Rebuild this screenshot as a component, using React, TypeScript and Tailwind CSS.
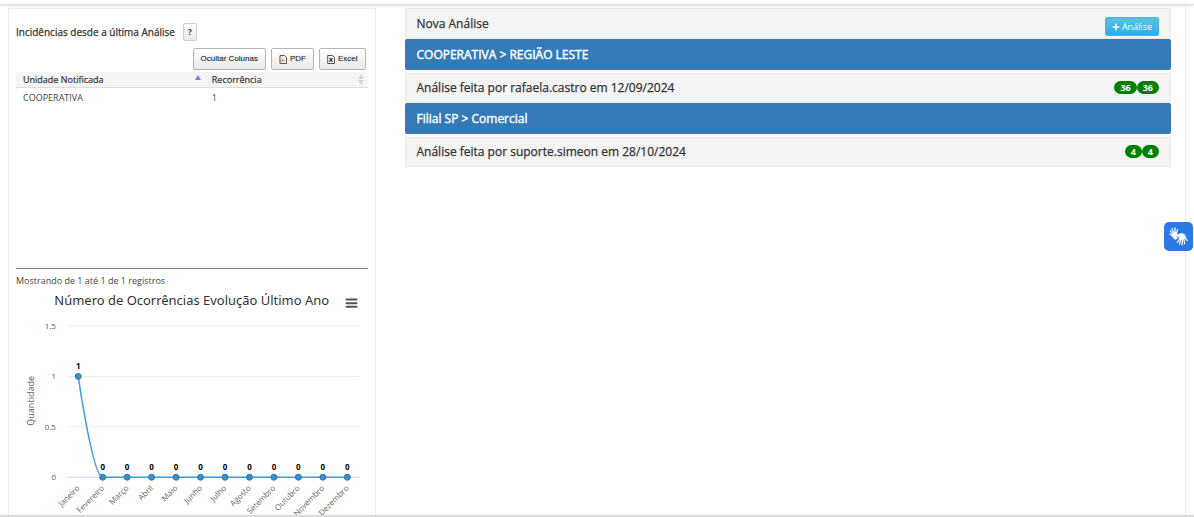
import { FaPlus } from "react-icons/fa";

const months = [
  "Janeiro", "Fevereiro", "Março", "Abril", "Maio", "Junho",
  "Julho", "Agosto", "Setembro", "Outubro", "Novembro", "Dezembro",
];
const values = [1, 0, 0, 0, 0, 0, 0, 0, 0, 0, 0, 0];
const ticks = [1.5, 1, 0.5, 0];

const px = (i: number) => 62.3 + i * 24.5;
const py = (v: number) => 190.5 - v * 101;

function Chart() {
  return (
    <svg viewBox="0 0 352 228" className="block w-full overflow-visible font-['Noto_Sans',sans-serif]" role="img" aria-label="Número de Ocorrências Evolução Último Ano">
      <text x="176" y="18" textAnchor="middle" fontSize="13" fill="#333">Número de Ocorrências Evolução Último Ano</text>
      <path d="M331 12.5h10M331 16.2h10M331 19.9h10" stroke="#555" strokeWidth="2" strokeLinecap="round" />
      {ticks.map((t) => (
        <g key={t}>
          <path d={`M51 ${py(t)}H344`} stroke={t === 0 ? "#ccd6eb" : "#ededed"} />
          <text x="40" y={py(t) + 3} textAnchor="end" fontSize="8" fill="#666">{t}</text>
        </g>
      ))}
      <text transform="translate(18 114) rotate(-90)" textAnchor="middle" fontSize="9" fill="#666">Quantidade</text>
      <path
        d={`M${px(0)} ${py(1)}C${px(0)} ${py(1)} 76.8 ${py(0)} ${px(1)} ${py(0)}H${px(11)}`}
        fill="none" stroke="#3d9fe0" strokeWidth="1.5"
      />
      {months.map((m, i) => (
        <g key={m}>
          <circle cx={px(i)} cy={py(values[i])} r="3" fill="#2b93dc" stroke="#4d6f88" />
          <text x={px(i)} y={py(values[i]) - 7} textAnchor="middle" fontSize="8" fontWeight="700" fill="#000">{values[i]}</text>
          <text transform={`translate(${px(i) + 2} 202) rotate(-45)`} textAnchor="end" fontSize="8" fill="#666" className="font-['Open_Sans',sans-serif]">{m}</text>
        </g>
      ))}
    </svg>
  );
}

function PdfIcon() {
  return (
    <svg width="8" height="9" viewBox="0 0 8 9" fill="none">
      <path d="M1 .5h4.5l2 2v6H1z" stroke="#444" strokeWidth=".9" />
      <path d="M2.3 7C3.6 5.8 4 4 3.8 2.8M3.8 4.6c.5 1 1.4 1.3 2.4 1.2M2.6 6l3-.6" stroke="#b98c6a" strokeWidth=".8" />
      <path d="M.8 1v7.6" stroke="#c48a52" strokeWidth=".8" />
    </svg>
  );
}

function ExcelIcon() {
  return (
    <svg width="8" height="9" viewBox="0 0 8 9" fill="none">
      <path d="M.7 .5h4.8l2 2v6H.7z" stroke="#444" strokeWidth=".9" />
      <path d="M2.5 3l3 3.6M5.5 3l-3 3.6" stroke="#222" strokeWidth="1.1" />
    </svg>
  );
}

function HandsIcon() {
  return (
    <svg width="19" height="19" viewBox="0.5 0.5 17 17" fill="none" stroke="#fff" strokeLinecap="round" strokeLinejoin="round">
      <path d="M4 6.5 6.5 5.3 8.3 7.4 7 9.2 8 10.8 5.8 11.6 3.8 9.6z" fill="#fff" strokeWidth=".6" />
      <path d="M4.2 7.5 1.7 4M5 6.5 3.2 1.8M6 6 5.9 1.2M7 6.5 8.2 2.6M4.4 9 1.2 6.8" strokeWidth="1.1" />
      <path d="M9 7.3 11.5 6.2 14.6 7.3 15.3 10 13 11.7 10 11.2 9.7 9.5 8.2 9.3z" fill="#fff" strokeWidth=".6" />
      <path d="M10.4 10.8 7.8 14.2M11.4 11 9.8 16M12.7 11 12.2 16.4M13.8 10.8 14.5 15.4M14.8 9.8 16.8 12.6" strokeWidth="1.1" />
    </svg>
  );
}

function Badge({ children }: { children: number }) {
  return <span className="rounded-full bg-[#008000] px-1.5 text-[9px] leading-[13px] font-bold text-white">{children}</span>;
}

function Row({ title, count }: { title: string; count: number }) {
  return (
    <div className="mt-[3px] flex h-[30px] items-center justify-between rounded-xs border border-[#e8e8e8] bg-[#f4f4f4] px-[11px]">
      <h3 className="[-webkit-text-stroke:0.25px]">{title}</h3>
      <div className="flex pb-[2px]">
        <Badge>{count}</Badge>
        <Badge>{count}</Badge>
      </div>
    </div>
  );
}

function Group({ title }: { title: string }) {
  return <h2 className="flex h-[31px] items-center rounded-xs bg-[#337ab7] px-3 text-white [-webkit-text-stroke:0.4px]">{title}</h2>;
}

const toolButton =
  "flex h-[22px] items-center gap-[3px] rounded-xs border border-[#b5b5b5] bg-linear-to-b from-white to-[#e9e9e9] px-[7px] text-[8px] text-[#222] [-webkit-text-stroke:0.1px]";

export default function App() {
  return (
    <div className="flex min-h-screen flex-col overflow-hidden bg-white font-['Open_Sans',sans-serif] text-[#333]">
      <header className="h-[5px] border-b border-[#e4e4e4] shadow-sm" />
      <main className="mr-2 ml-2 flex flex-1 border-r border-[#ececec] pt-[3px] pr-[14px]">
        <section className="flex w-[31.6%] flex-col border-x border-t border-[#ececec] px-[7px]">
          <div className="flex items-center gap-2 pt-[14px]">
            <h1 className="text-[10px] [-webkit-text-stroke:0.25px]">Incidências desde a última Análise</h1>
            <button className="h-[18px] w-[14px] rounded-xs border border-[#ccc] bg-linear-to-b from-white to-[#e9e9e9] text-[8px] font-bold" aria-label="Ajuda">?</button>
          </div>
          <div className="mt-[7px] flex justify-end gap-[5px] pr-[2px] font-['Liberation_Sans',sans-serif]">
            <button className={toolButton}>Ocultar Colunas</button>
            <button className={toolButton}><PdfIcon />PDF</button>
            <button className={toolButton}><ExcelIcon />Excel</button>
          </div>
          <div className="mt-[2px] h-[197px] border-b border-[#777]">
            <table className="w-full table-fixed text-left text-[9px]">
              <thead className="border-b border-[#ddd] bg-[#f4f4f4] [-webkit-text-stroke:0.2px]">
                <tr>
                  <th className="h-[15px] w-[54%] pr-[5px] pl-[7px] font-normal">
                    <div className="flex items-center justify-between">Unidade Notificada
                      <svg width="6" height="5" viewBox="0 0 6 5" className="-mt-1"><path d="M3 0l3 5H0z" fill="#7b84e3" /></svg>
                    </div>
                  </th>
                  <th className="pr-1 pl-[6px] font-normal">
                    <div className="flex items-center justify-between">Recorrência
                      <svg width="6" height="11" viewBox="0 0 6 11"><path d="M3 0l3 5H0zM3 11L0 6h6z" fill="#d6d6d6" /></svg>
                    </div>
                  </th>
                </tr>
              </thead>
              <tbody className="text-[#444]">
                <tr><td className="h-[21px] px-[7px]">COOPERATIVA</td><td className="px-[6px]">1</td></tr>
              </tbody>
            </table>
          </div>
          <p className="pt-[6px] text-[9px] leading-3 text-[#444]">Mostrando de 1 até 1 de 1 registros</p>
          <Chart />
        </section>
        <section className="ml-[29px] flex-1 text-[12px]">
          <div className="flex h-[31px] items-center justify-between rounded-xs border border-[#e8e8e8] bg-[#f4f4f4] px-[11px]">
            <h2 className="[-webkit-text-stroke:0.25px]">Nova Análise</h2>
            <button className="mt-[6px] flex h-[19px] items-center gap-[2px] rounded-xs border border-[#46b8da] bg-linear-to-b from-[#5bc0de] to-[#2aaef0] px-[6px] text-[9px] text-white">
              <FaPlus size={8} />Análise
            </button>
          </div>
          <Group title="COOPERATIVA > REGIÃO LESTE" />
          <Row title="Análise feita por rafaela.castro em 12/09/2024" count={36} />
          <Group title="Filial SP > Comercial" />
          <Row title="Análise feita por suporte.simeon em 28/10/2024" count={4} />
        </section>
      </main>
      <footer className="h-[2px] bg-[#d8dadb]" />
      <button aria-label="Libras" className="fixed top-[222px] right-[1px] flex h-[29px] w-[29px] items-center justify-center rounded-[5px] bg-[#2a78e4] text-white">
        <HandsIcon />
      </button>
    </div>
  );
}
